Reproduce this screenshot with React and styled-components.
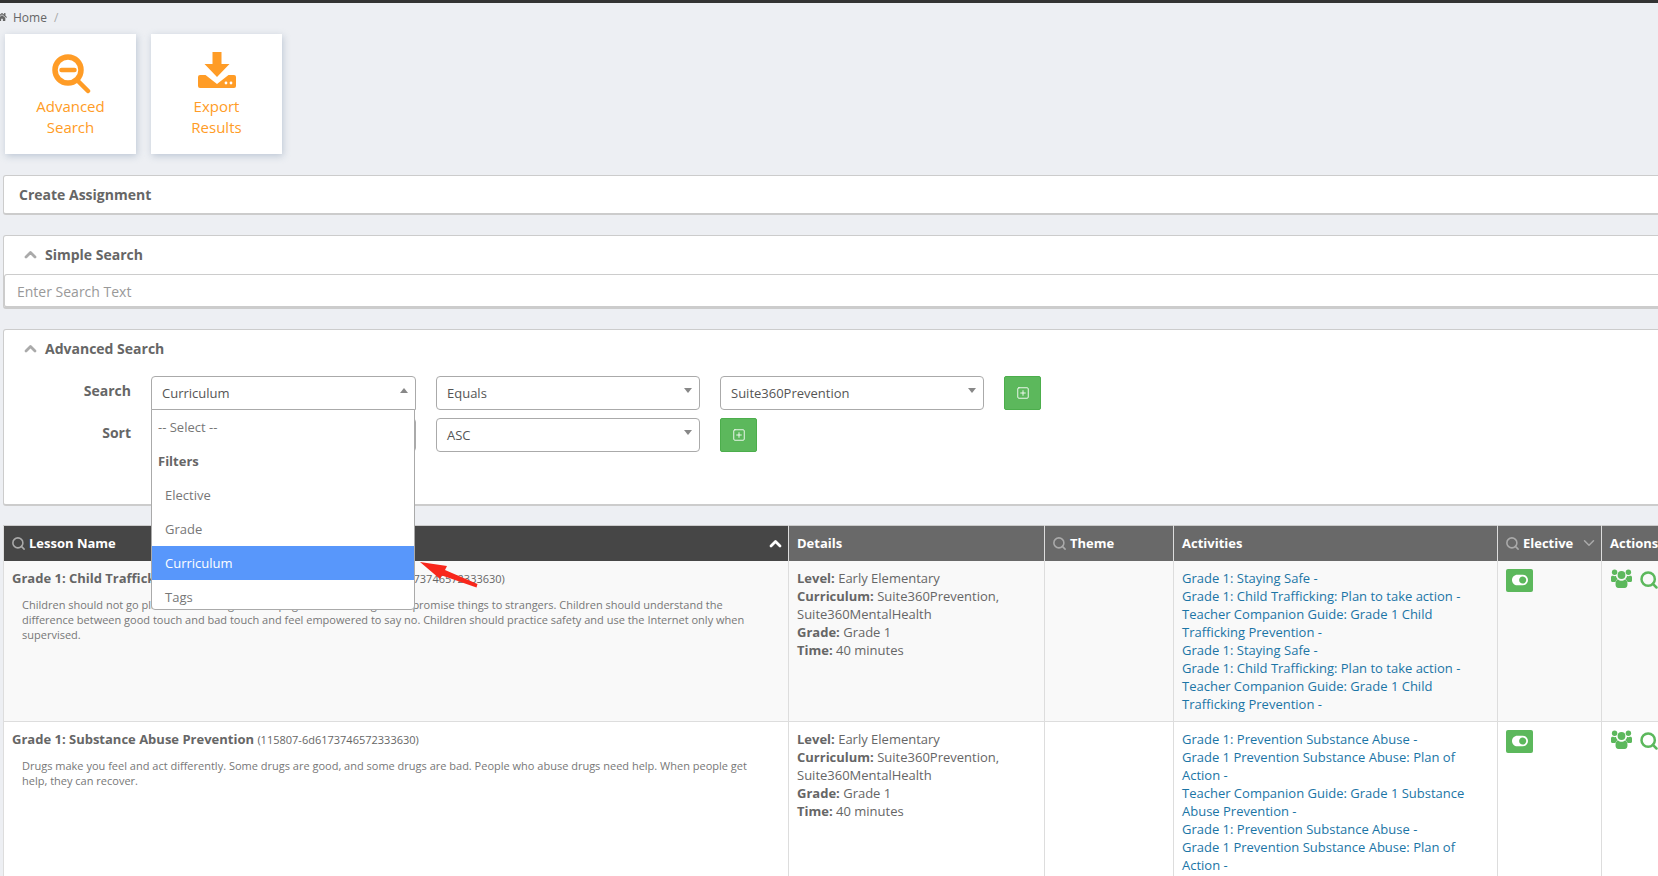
import React from 'react';
import styled, { createGlobalStyle } from 'styled-components';
import { FaHome, FaToggleOn } from 'react-icons/fa';
import { Search, ChevronDown, SquarePlus } from 'lucide-react';

const GlobalStyle = createGlobalStyle`
  html, body {
    margin: 0;
    height: 876px;
    overflow: hidden;
    background: #edeff3;
    font-family: "Open Sans", "Liberation Sans", sans-serif;
    color: #666;
  }
`;

const Page = styled.div`
  position: relative;
  width: 1760px;
  height: 876px;
  overflow: hidden;
  border-top: 3px solid #333;
  box-sizing: border-box;
  padding-left: 3px;
`;

const Breadcrumb = styled.div`
  height: 28px;
  margin-left: -6px;
  display: flex;
  align-items: center;
  gap: 6px;
  font-size: 12px;
  color: #666;
  svg { font-size: 10px; }
  span + span { color: #aaa; margin-left: 1px; }
`;

const Cards = styled.div`
  display: flex;
  gap: 15px;
  padding: 3px 0 0 2px;
  margin-bottom: 21px;
`;

const Card = styled.div`
  width: 131px;
  height: 120px;
  background: #fff;
  box-shadow: 1px 2px 7px rgba(130, 150, 175, 0.45);
  display: flex;
  flex-direction: column;
  align-items: center;
  padding-top: 20px;
  box-sizing: border-box;
  color: #ff9c26;
  font-size: 15px;
  line-height: 21px;
  text-align: center;
`;

const CardIcon = styled.svg`
  width: 40px;
  height: 40px;
  margin: ${p => p.$shift || 0}px 0 ${p => 2 - (p.$shift || 0)}px;
  flex: none;
`;

const Panel = styled.section`
  background: #fff;
  border: 1px solid #ccc;
  border-bottom-width: 2px;
  border-radius: 3px;
  margin-bottom: ${p => p.$gap ?? 20}px;
  box-sizing: border-box;
  height: ${p => p.$height}px;
`;

const PanelTitle = styled.div`
  display: flex;
  align-items: center;
  gap: 8px;
  height: 36px;
  margin-bottom: 2px;
  padding-left: ${p => p.$indent || 20}px;
  font-size: 14px;
  font-weight: 700;
  color: #666;
`;

const ChevronMark = styled.svg`
  width: 13px;
  height: 9px;
  flex: none;
  fill: none;
  stroke: ${p => p.$color || '#aaa'};
  stroke-width: 2.8;
  stroke-linecap: round;
  stroke-linejoin: round;
`;

const SearchInput = styled.div`
  height: 34px;
  border: 1px solid #ccc;
  border-bottom-width: 2px;
  border-radius: 3px;
  box-sizing: border-box;
  padding: 1px 0 0 12px;
  display: flex;
  align-items: center;
  font-size: 14px;
  color: #999;
`;

const FormRows = styled.div`
  display: flex;
  flex-direction: column;
  gap: 8px;
  padding-top: 8px;
`;

const FormRow = styled.div`
  display: flex;
  align-items: center;
  gap: 20px;
`;

const FormLabel = styled.label`
  width: 127px;
  text-align: right;
  font-size: 14px;
  font-weight: 700;
  color: #666;
  margin-top: -6px;
`;

const SelectBox = styled.div`
  position: relative;
  width: ${p => (p.$wide ? 265 : 264)}px;
  height: 34px;
  box-sizing: border-box;
  border: 1px solid #aaa;
  border-radius: 4px;
  padding: 0 10px;
  display: flex;
  align-items: center;
  justify-content: space-between;
  font-size: 13px;
  color: #555;
  background: #fff;
  ${p => p.$open && 'border-bottom-left-radius: 0; border-bottom-right-radius: 0;'}
`;

const Caret = styled.i`
  width: 0;
  height: 0;
  margin: -5px -3px 0 0;
  border-left: 4px solid transparent;
  border-right: 4px solid transparent;
  ${p => (p.$up ? 'border-bottom: 5px solid #888;' : 'border-top: 5px solid #888;')}
`;

const Dropdown = styled.ul`
  position: absolute;
  z-index: 5;
  top: 32px;
  left: -1px;
  width: 264px;
  height: 201px;
  overflow: hidden;
  margin: 0;
  padding: 0;
  list-style: none;
  box-sizing: border-box;
  background: #fff;
  border: 1px solid #aaa;
  border-radius: 0 0 4px 4px;
`;

const Option = styled.li`
  height: 34px;
  display: flex;
  align-items: center;
  padding-left: ${p => (p.$nested ? 13 : 6)}px;
  font-size: 13px;
  font-weight: ${p => (p.$group ? 700 : 400)};
  color: ${p => (p.$active ? '#fff' : p.$group ? '#666' : '#777')};
  background: ${p => (p.$active ? '#5897fb' : 'transparent')};
`;

const AddButton = styled.button`
  width: 37px;
  height: 34px;
  padding: 0;
  border: 1px solid #4cae4c;
  border-radius: 2px;
  background: #5cb85c;
  color: #fff;
  display: flex;
  align-items: center;
  justify-content: center;
`;

const Table = styled.table`
  width: 1757px;
  table-layout: fixed;
  border-collapse: collapse;
  background: #fff;
  border-left: 1px solid #ddd;
`;

const HeadCell = styled.th`
  height: 35px;
  box-sizing: border-box;
  padding: 0 8px;
  background: ${p => (p.$sorted ? '#464646' : '#696969')};
  border-right: 1px solid #ddd;
  border-top: 1px solid #ccc;
  color: #fff;
  font-size: 13px;
  font-weight: 700;
  text-align: left;
  white-space: nowrap;
`;

const HeadInner = styled.div`
  display: flex;
  align-items: center;
  gap: 3px;
  > svg:first-child { margin-left: -1px; }
`;

const HeadEnd = styled.span`
  margin: 0 ${p => (p.$light ? -2 : -5)}px 0 auto;
  display: flex;
  align-items: center;
  color: #aaa;
`;

const Row = styled.tr`
  background: ${p => (p.$striped ? '#f9f9f9' : '#fff')};
  border-bottom: 1px solid #ddd;
`;

const Cell = styled.td`
  vertical-align: top;
  padding: 8px;
  border-right: 1px solid #ddd;
  font-size: 13px;
  line-height: 18px;
  color: #666;
`;

const LessonTitle = styled.div`
  font-weight: 700;
  white-space: nowrap;
  small {
    font-size: 11px;
    font-weight: 400;
  }
`;

const LessonDesc = styled.p`
  margin: 9px 28px 0 10px;
  font-size: 11px;
  line-height: 15px;
  color: #777;
`;

const DetailLine = styled.div`
  b { font-weight: 700; }
`;

const ActivityLink = styled.a`
  display: block;
  color: #1b75a6;
  padding-right: 15px;
`;

const ToggleButton = styled.div`
  width: 27px;
  height: 23px;
  border-radius: 2px;
  background: #5cb85c;
  color: #fff;
  display: flex;
  align-items: center;
  justify-content: center;
  font-size: 16px;
`;

const ActionIcons = styled.div`
  display: flex;
  align-items: flex-start;
  gap: 7px;
  margin-left: 1px;
  color: #5cb85c;
  svg:last-child { margin-top: 1px; }
`;

const GroupIcon = styled.svg`
  width: 21px;
  height: 19px;
  flex: none;
`;

const RedArrow = styled.svg`
  position: absolute;
  z-index: 6;
  left: 415px;
  top: 552px;
  width: 70px;
  height: 36px;
`;

const lessons = [
  {
    title: 'Grade 1: Child Trafficking Prevention with Families',
    id: '(115806-6d6173746572333630)',
    desc: 'Children should not go places with strangers, accept gifts from strangers, or promise things to strangers. Children should understand the difference between good touch and bad touch and feel empowered to say no. Children should practice safety and use the Internet only when supervised.',
    activities: [
      'Grade 1: Staying Safe -',
      'Grade 1: Child Trafficking: Plan to take action -',
      'Teacher Companion Guide: Grade 1 Child Trafficking Prevention -',
      'Grade 1: Staying Safe -',
      'Grade 1: Child Trafficking: Plan to take action -',
      'Teacher Companion Guide: Grade 1 Child Trafficking Prevention -',
    ],
  },
  {
    title: 'Grade 1: Substance Abuse Prevention',
    id: '(115807-6d6173746572333630)',
    desc: 'Drugs make you feel and act differently. Some drugs are good, and some drugs are bad. People who abuse drugs need help. When people get help, they can recover.',
    activities: [
      'Grade 1: Prevention Substance Abuse -',
      'Grade 1 Prevention Substance Abuse: Plan of Action -',
      'Teacher Companion Guide: Grade 1 Substance Abuse Prevention -',
      'Grade 1: Prevention Substance Abuse -',
      'Grade 1 Prevention Substance Abuse: Plan of Action -',
    ],
  },
];

function ZoomOutIcon() {
  return (
    <CardIcon viewBox="0 0 40 40">
      <circle cx="17" cy="16" r="13" fill="none" stroke="#ff9c26" strokeWidth="5.5" />
      <path d="M10.5 16h13M27 27l10 10" stroke="#ff9c26" strokeWidth="4.5" strokeLinecap="round" />
    </CardIcon>
  );
}

function ExportIcon() {
  return (
    <CardIcon viewBox="0 0 40 40" $shift={-3}>
      <path d="M15.500 1h9v12h8L20 26 7.500 13h8z" fill="#ff9c26" />
      <path d="M3 24h5.500L20 33l11.500-9H37a2 2 0 0 1 2 2v9a2 2 0 0 1-2 2H3a2 2 0 0 1-2-2v-9a2 2 0 0 1 2-2z" fill="#ff9c26" />
      <circle cx="29" cy="32" r="1.4" fill="#fff" />
      <circle cx="34" cy="32" r="1.4" fill="#fff" />
    </CardIcon>
  );
}

function UsersIcon() {
  return (
    <GroupIcon viewBox="0 0 21 19" fill="currentColor">
      <circle cx="3.6" cy="3.2" r="2.7" />
      <circle cx="17.4" cy="3.2" r="2.7" />
      <circle cx="10.5" cy="6" r="3.9" />
      <path d="M0 8.5C0 7 1 6.4 2 6.8c1 .4 2 .4 3 .2.2 1.5.9 2.4 1.8 3.2C5.4 10.8 4.7 11.8 4.5 13H1.5C.5 13 0 12.3 0 11.5z" />
      <path d="M21 8.5c0-1.500-1-2.100-2-1.700-1 .4-2 .4-3 .2-.2 1.500-.9 2.400-1.800 3.200 1.400.6 2.100 1.600 2.300 2.800h3c1 0 1.500-.7 1.500-1.500z" />
      <path d="M7 10.500c1 .9 2.200 1.200 3.500 1.200s2.500-.3 3.500-1.200c1.600.3 2.500 1.900 2.500 4.500 0 2.500-1 4-3 4H7.500c-2 0-3-1.500-3-4 0-2.600.9-4.200 2.500-4.500z" />
    </GroupIcon>
  );
}

function UpChevron({ color }) {
  return (
    <ChevronMark viewBox="0 0 13 9" $color={color}>
      <path d="M2 7l4.500-4.500L11 7" />
    </ChevronMark>
  );
}

function HeadSearch() {
  return <Search size={15} color="#aaa" strokeWidth={2.5} />;
}

export default function App() {
  return (
    <>
      <GlobalStyle />
      <Page>
        <Breadcrumb>
          <FaHome />
          <span>Home</span>
          <span>/</span>
        </Breadcrumb>

        <Cards>
          <Card>
            <ZoomOutIcon />
            Advanced<br />Search
          </Card>
          <Card>
            <ExportIcon />
            Export<br />Results
          </Card>
        </Cards>

        <Panel $height={40}>
          <PanelTitle $indent={15}>Create Assignment</PanelTitle>
        </Panel>

        <Panel $height={74}>
          <PanelTitle>
            <UpChevron />
            Simple Search
          </PanelTitle>
          <SearchInput>Enter Search Text</SearchInput>
        </Panel>

        <Panel $height={177} $gap={19}>
          <PanelTitle>
            <UpChevron />
            Advanced Search
          </PanelTitle>
          <FormRows>
            <FormRow>
              <FormLabel>Search</FormLabel>
              <SelectBox $open $wide>
                Curriculum
                <Caret $up />
                <Dropdown>
                  <Option>-- Select --</Option>
                  <Option $group>Filters</Option>
                  <Option $nested>Elective</Option>
                  <Option $nested>Grade</Option>
                  <Option $nested $active>Curriculum</Option>
                  <Option $nested>Tags</Option>
                </Dropdown>
              </SelectBox>
              <SelectBox>Equals<Caret /></SelectBox>
              <SelectBox>Suite360Prevention<Caret /></SelectBox>
              <AddButton><SquarePlus size={14} strokeWidth={1.5} /></AddButton>
            </FormRow>
            <FormRow>
              <FormLabel>Sort</FormLabel>
              <SelectBox $wide />
              <SelectBox>ASC<Caret /></SelectBox>
              <AddButton><SquarePlus size={14} strokeWidth={1.5} /></AddButton>
            </FormRow>
          </FormRows>
        </Panel>

        <Table>
          <colgroup>
            <col style={{ width: 785 }} />
            <col style={{ width: 256 }} />
            <col style={{ width: 129 }} />
            <col style={{ width: 324 }} />
            <col style={{ width: 104 }} />
            <col />
          </colgroup>
          <thead>
            <tr>
              <HeadCell $sorted>
                <HeadInner>
                  <HeadSearch />
                  Lesson Name
                  <HeadEnd $light><UpChevron color="#fff" /></HeadEnd>
                </HeadInner>
              </HeadCell>
              <HeadCell>Details</HeadCell>
              <HeadCell><HeadInner><HeadSearch />Theme</HeadInner></HeadCell>
              <HeadCell>Activities</HeadCell>
              <HeadCell>
                <HeadInner>
                  <HeadSearch />
                  Elective
                  <HeadEnd><ChevronDown size={18} strokeWidth={2} /></HeadEnd>
                </HeadInner>
              </HeadCell>
              <HeadCell>Actions</HeadCell>
            </tr>
          </thead>
          <tbody>
            {lessons.map((lesson, i) => (
              <Row key={lesson.id} $striped={i === 0}>
                <Cell>
                  <LessonTitle>{lesson.title} <small>{lesson.id}</small></LessonTitle>
                  <LessonDesc>{lesson.desc}</LessonDesc>
                </Cell>
                <Cell>
                  <DetailLine><b>Level:</b> Early Elementary</DetailLine>
                  <DetailLine><b>Curriculum:</b> Suite360Prevention, Suite360MentalHealth</DetailLine>
                  <DetailLine><b>Grade:</b> Grade 1</DetailLine>
                  <DetailLine><b>Time:</b> 40 minutes</DetailLine>
                </Cell>
                <Cell />
                <Cell>
                  {lesson.activities.map((activity, j) => (
                    <ActivityLink key={j}>{activity}</ActivityLink>
                  ))}
                </Cell>
                <Cell><ToggleButton><FaToggleOn /></ToggleButton></Cell>
                <Cell>
                  <ActionIcons>
                    <UsersIcon />
                    <Search size={20} strokeWidth={3} />
                  </ActionIcons>
                </Cell>
              </Row>
            ))}
          </tbody>
        </Table>

        <RedArrow viewBox="0 0 70 36">
          <path d="M5 7l27 4-2 4 32.500 14-1 3.500L27 20.500 25 24z" fill="#f8271c" />
        </RedArrow>
      </Page>
    </>
  );
}
